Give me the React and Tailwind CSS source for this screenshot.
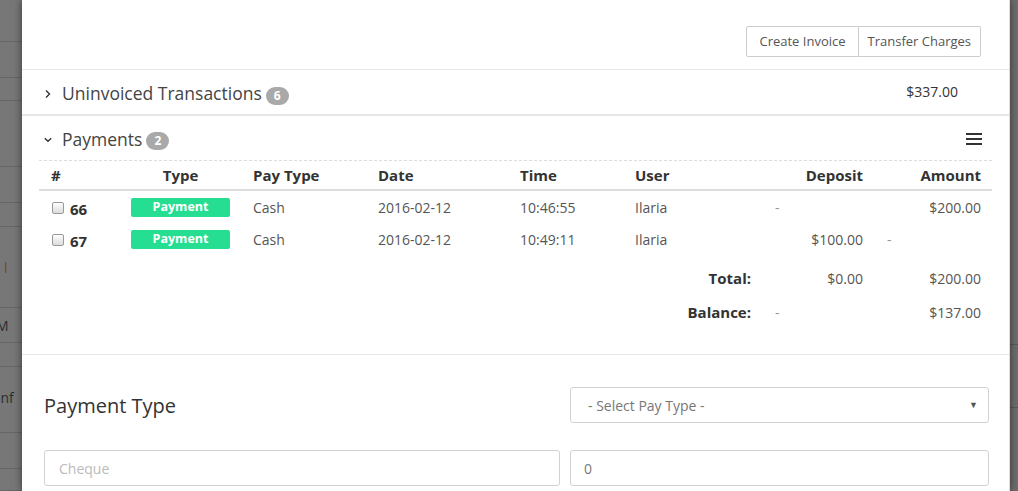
import React from "react";

const font = { fontFamily: '"Open Sans", "Liberation Sans", sans-serif' };

function Checkbox() {
  return (
    <span className="inline-block w-[12px] h-[12px] rounded-[2px] border border-[#9a9a9a] bg-gradient-to-b from-[#fdfdfd] to-[#dcdcdc] mr-[6px] relative top-[1px]" />
  );
}

function Badge({ n }) {
  return (
    <span className="inline-flex items-center justify-center min-w-[23px] h-[18px] px-[6px] rounded-[9px] bg-[#a9a9a9] text-white text-[12px] font-bold leading-none ml-[4px] relative top-[2px]">
      {n}
    </span>
  );
}

function PayBadge() {
  return (
    <span className="flex items-center justify-center w-[99px] h-[19px] rounded-[2px] bg-[#26de91] text-white text-[12.5px] font-bold leading-none">
      Payment
    </span>
  );
}

const cols = "grid grid-cols-[84px_122px_125px_142px_115px_140px_112px_114px]";

export default function App() {
  const bgLines = [42, 36, 23, 66, 36, 24, 81, 35, 24, 66, 36, 22];
  return (
    <div className="w-[1018px] h-[491px] overflow-hidden flex bg-[#777777]" style={font}>
      {/* background page strip left */}
      <div className="w-[22px] shrink-0 flex flex-col text-[14px]">
        {bgLines.map((h, i) => (
          <div
            key={i}
            className="border-b border-[#666666] shrink-0 flex items-center overflow-hidden whitespace-nowrap"
            style={{ height: h }}
          >
            {i === 6 && <span className="text-[#7a4a12] pl-[4px]">l</span>}
            {i === 7 && <span className="text-[#2e2e2e] ml-[-4px]">M</span>}
            {i === 9 && <span className="text-[#2e2e2e] ml-[-8px] relative top-[-2px]">onf</span>}
          </div>
        ))}
      </div>

      {/* modal */}
      <div className="w-[988px] shrink-0 bg-white border-r border-[#dcdcdc] shadow-[0_0_8px_rgba(0,0,0,0.55)] relative z-10 flex flex-col text-[#333]">
        {/* top buttons */}
        <div className="h-[69px] flex justify-end items-start pt-[26px] pr-[28px]">
          <div className="flex h-[31px] text-[13px] text-[#555]">
            <button className="px-[12px] border border-[#cccccc] rounded-l-[2px] bg-white">Create Invoice</button>
            <button className="px-[9px] border border-l-0 border-[#cccccc] rounded-r-[2px] bg-white">Transfer Charges</button>
          </div>
        </div>

        {/* uninvoiced */}
        <div className="border-t border-[#e6e6e6] h-[45px] flex items-center pl-[22px] pr-[50px] pt-[3px]">
          <svg width="8" height="10" viewBox="0 0 8 10" className="mr-[10px] mt-[1px]">
            <path d="M2 1.5 L5.5 5 L2 8.5" fill="none" stroke="#333" strokeWidth="1.4" />
          </svg>
          <span className="text-[17.5px] text-[#444]">Uninvoiced Transactions</span>
          <Badge n="6" />
          <span className="ml-auto text-[14px] text-[#333] relative top-[-2px] left-[-1px]">$337.00</span>
        </div>

        {/* payments */}
        <div className="border-t-2 border-[#e6e6e6] px-[17px]">
          <div className="h-[44px] flex items-center pl-[5px] pr-[9px] pt-[2px]">
            <svg width="8" height="10" viewBox="0 0 8 10" className="mr-[10px] mt-[1px]">
              <path d="M0.8 3.2 L4 6.2 L7.2 3.2" fill="none" stroke="#333" strokeWidth="1.4" />
            </svg>
            <span className="text-[17.5px] text-[#444]">Payments</span>
            <Badge n="2" />
            <svg width="17" height="14" viewBox="0 0 17 14" className="ml-auto">
              <rect x="0" y="1" width="16" height="2" fill="#333" />
              <rect x="0" y="6" width="16" height="2" fill="#333" />
              <rect x="0" y="11" width="16" height="2" fill="#333" />
            </svg>
          </div>

          <div className="border-t border-dashed border-[#dddddd]">
            {/* header */}
            <div className={`${cols} h-[30px] items-center border-b-2 border-[#dddddd] text-[15px] font-bold text-[#333]`}>
              <div className="pl-[12px]">#</div>
              <div className="pl-[8px] pr-[15px] text-center">Type</div>
              <div className="pl-[8px]">Pay Type</div>
              <div className="pl-[8px]">Date</div>
              <div className="pl-[8px]">Time</div>
              <div className="pl-[8px]">User</div>
              <div className="pr-[16px] text-right">Deposit</div>
              <div className="pr-[12px] text-right">Amount</div>
            </div>

            {[
              { id: "66", time: "10:46:55", dep: null, amt: "$200.00" },
              { id: "67", time: "10:49:11", dep: "$100.00", amt: null },
            ].map((r) => (
              <div key={r.id} className={`${cols} h-[32px] items-center text-[14px] text-[#555]`}>
                <div className="pl-[13px] flex items-center">
                  <Checkbox />
                  <span className="font-bold text-[15px] text-[#333] relative top-[2px]">{r.id}</span>
                </div>
                <div className="pl-[8px] pr-[15px]">
                  <PayBadge />
                </div>
                <div className="pl-[8px]">Cash</div>
                <div className="pl-[8px]">2016-02-12</div>
                <div className="pl-[8px]">{r.time}</div>
                <div className="pl-[8px]">Ilaria</div>
                {r.dep ? (
                  <div className="pr-[16px] text-right">{r.dep}</div>
                ) : (
                  <div className="pl-[8px] text-[#999]">-</div>
                )}
                {r.amt ? (
                  <div className="pr-[12px] text-right">{r.amt}</div>
                ) : (
                  <div className="pl-[8px] text-[#999]">-</div>
                )}
              </div>
            ))}

            <div className={`${cols} h-[34px] mt-[6px] items-center text-[14px] text-[#555]`}>
              <div className="col-span-5" />
              <div className="pr-[16px] text-right font-bold text-[15px] text-[#333]">Total:</div>
              <div className="pr-[16px] text-right">$0.00</div>
              <div className="pr-[12px] text-right">$200.00</div>
            </div>
            <div className={`${cols} h-[34px] items-center text-[14px] text-[#555]`}>
              <div className="col-span-5" />
              <div className="pr-[16px] text-right font-bold text-[15px] text-[#333]">Balance:</div>
              <div className="pl-[8px] text-[#999]">-</div>
              <div className="pr-[12px] text-right">$137.00</div>
            </div>
          </div>
          <div className="h-[25px]" />
        </div>

        {/* form */}
        <div className="border-t border-[#e6e6e6] pt-[32px] pl-[22px] pr-[20px]">
          <div className="grid grid-cols-[516px_419px] gap-x-[10px] gap-y-[27px]">
            <div className="h-[36px] flex items-center text-[20px] text-[#333] pt-[2px]">Payment Type</div>
            <div className="h-[36px] border border-[#d2d2d2] rounded-[3px] flex items-center pl-[17px] pr-[10px] text-[14px] text-[#777]">
              <span>- Select Pay Type -</span>
              <span className="ml-auto text-[9px] text-[#555]">▼</span>
            </div>
            <div className="h-[36px] border border-[#d2d2d2] rounded-[3px] flex items-center pl-[14px] text-[14px] text-[#bbbbbb]">
              Cheque
            </div>
            <div className="h-[36px] border border-[#d2d2d2] rounded-[3px] flex items-center pl-[13px] text-[14px] text-[#777]">
              0
            </div>
          </div>
        </div>
      </div>

      {/* right strip */}
      <div className="w-[8px] shrink-0 flex flex-col bg-[#6d6d6d]">
        <div className="h-[345px] border-b border-[#5a5a5a]" />
        <div className="h-[63px] border-b border-[#5a5a5a]" />
      </div>
    </div>
  );
}
